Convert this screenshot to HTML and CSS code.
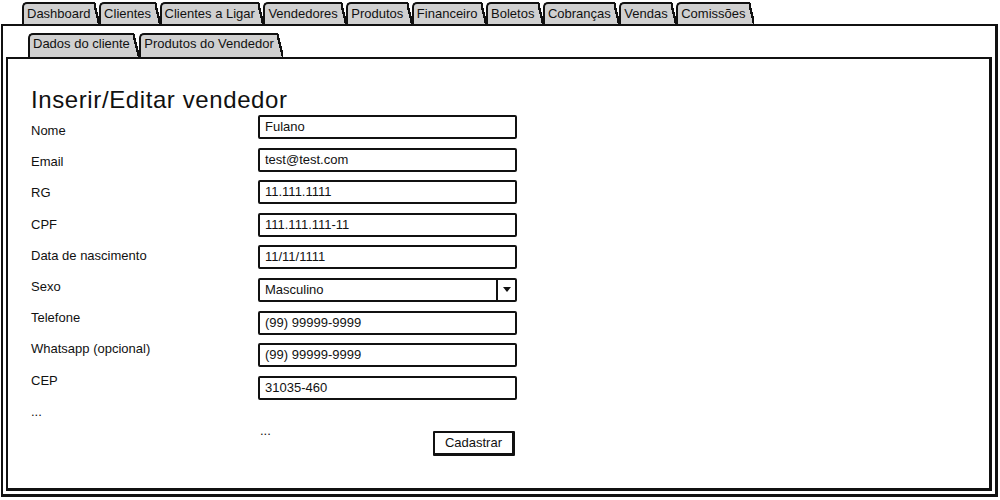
FILE: index.html
```html
<!DOCTYPE html>
<html lang="pt-BR">
<head>
    <meta charset="UTF-8">
    <meta name="viewport" content="width=device-width, initial-scale=1.0">
    <title>Inserir/Editar vendedor</title>
    <link rel="stylesheet" href="styles.css">
</head>
<body>
    <div class="frame">
        <nav class="tabs">
            <span class="tab">Dashboard</span>
            <span class="tab">Clientes</span>
            <span class="tab">Clientes a Ligar</span>
            <span class="tab">Vendedores</span>
            <span class="tab">Produtos</span>
            <span class="tab">Financeiro</span>
            <span class="tab">Boletos</span>
            <span class="tab">Cobranças</span>
            <span class="tab">Vendas</span>
            <span class="tab">Comissões</span>
        </nav>
        <div class="panel">
            <nav class="subtabs">
                <span class="tab">Dados do cliente</span>
                <span class="tab">Produtos do Vendedor</span>
            </nav>
            <div class="inner">
                <h1 class="title">Inserir/Editar vendedor</h1>
                <div class="form">
                    <div class="labels">
                        <div class="label">Nome</div>
                        <div class="label">Email</div>
                        <div class="label">RG</div>
                        <div class="label">CPF</div>
                        <div class="label">Data de nascimento</div>
                        <div class="label">Sexo</div>
                        <div class="label">Telefone</div>
                        <div class="label">Whatsapp (opcional)</div>
                        <div class="label">CEP</div>
                        <div class="label dots">...</div>
                    </div>
                    <div class="fields">
                        <div class="field">Fulano</div>
                        <div class="field">test@test.com</div>
                        <div class="field">11.111.1111</div>
                        <div class="field">111.111.111-11</div>
                        <div class="field">11/11/1111</div>
                        <div class="field select">
                            <span class="value">Masculino</span>
                            <span class="arrow"></span>
                        </div>
                        <div class="field">(99) 99999-9999</div>
                        <div class="field">(99) 99999-9999</div>
                        <div class="field">31035-460</div>
                        <div class="actions">
                            <span class="dots">...</span>
                            <button class="btn">Cadastrar</button>
                        </div>
                    </div>
                </div>
            </div>
        </div>
    </div>
</body>
</html>
```

FILE: styles.css
```css
body {
    margin: 0;
    font-family: "Liberation Sans", Arial, sans-serif;
    font-size: 13px;
    color: #111;
    background: #fff;
}
.frame {
    width: 1000px;
    height: 500px;
    display: flex;
    flex-direction: column;
}
.tabs {
    display: flex;
    margin: 2px 0 0 22px;
    height: 22px;
}
.tab {
    position: relative;
    background: #d0d0d0;
    border-top: 2px solid #111;
    border-left: 2px solid #111;
    border-top-left-radius: 5px;
    padding: 0 3.5px 0 3px;
    margin-right: 5px;
    line-height: 20px;
    white-space: nowrap;
}
/* slanted right edge of each tab */
.tab::after {
    content: '';
    position: absolute;
    top: -2px;
    bottom: 0;
    right: -5px;
    width: 5px;
    background: linear-gradient(to bottom left, transparent calc(50% - 1.2px), #111 calc(50% - 1.2px), #111 calc(50% + 1.2px), #d0d0d0 calc(50% + 1.2px));
}
.panel {
    margin: 0 2px 3px 1px;
    height: 473px;
    box-sizing: border-box;
    border: 2px solid #111;
    border-right-width: 3px;
    border-bottom-width: 3px;
    display: flex;
    flex-direction: column;
}
.subtabs {
    display: flex;
    margin: 7px 0 0 25px;
}
.subtabs .tab {
    line-height: 18px;
    padding-bottom: 4px;
    margin-right: 6px;
}
.subtabs .tab::after {
    right: -6px;
    width: 6px;
}
.inner {
    flex: 1;
    margin: 0 3px 3px 3px;
    border: 2px solid #111;
    border-right-width: 3px;
    border-bottom-width: 3px;
    padding: 27px 0 0 23px;
}
.title {
    margin: 0;
    font-size: 24px;
    font-weight: normal;
    line-height: 28px;
    letter-spacing: 0.6px;
}
.form {
    display: flex;
    margin-top: 1px;
}
.labels {
    width: 227px;
}
.label {
    line-height: 31.2px;
}
.fields {
    display: flex;
    flex-direction: column;
    gap: 8.6px;
    width: 259px;
}
.field {
    height: 24px;
    box-sizing: border-box;
    border: 2px solid #111;
    border-radius: 2px;
    padding: 0 5px;
    line-height: 20px;
    background: #fff;
}
.select {
    display: flex;
    padding-right: 0;
}
.select .value {
    flex: 1;
}
.arrow {
    width: 17px;
    border-left: 2px solid #111;
    display: flex;
    align-items: center;
    justify-content: center;
}
.arrow::before {
    content: '';
    border-left: 4px solid transparent;
    border-right: 4px solid transparent;
    border-top: 5px solid #111;
}
.actions {
    display: flex;
    justify-content: space-between;
    align-items: flex-start;
    margin-top: 15.4px;
    padding-left: 2px;
}
.actions .dots {
    line-height: 13px;
}
.btn {
    margin-top: 7px;
    margin-right: 2px;
    height: 25px;
    padding: 0 10px;
    font-family: "Liberation Sans", Arial, sans-serif;
    font-size: 13px;
    color: #111;
    background: #fff;
    border: 2px solid #111;
    border-right-width: 3px;
    border-bottom-width: 3px;
    border-radius: 1px;
}
```
